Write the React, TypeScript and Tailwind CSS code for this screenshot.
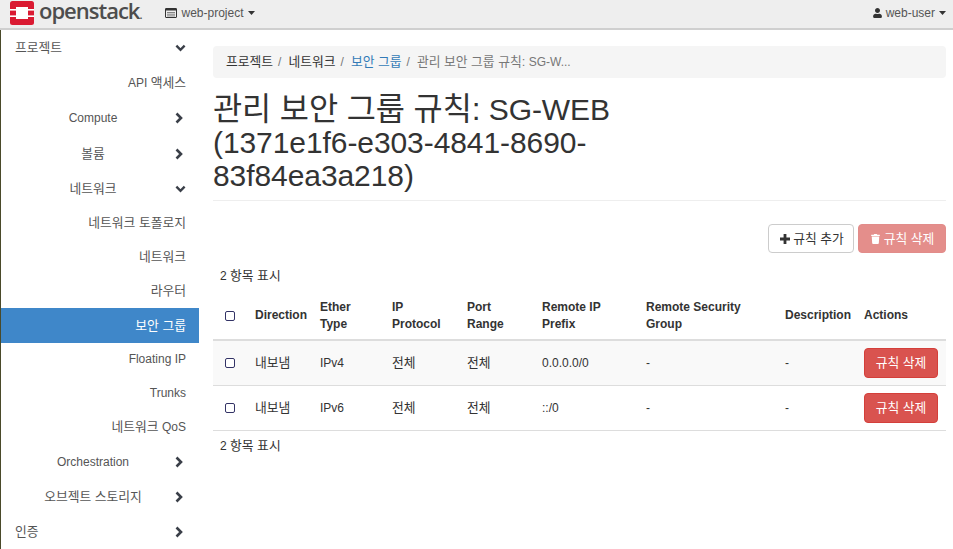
import React from 'react';
import { FaUser, FaTrash } from 'react-icons/fa';

const Logo = () => (
  <svg viewBox="0 0 24 24" className="w-[24px] h-[24px] shrink-0">
    <rect width="24" height="24" rx="2.5" fill="#da1a32" />
    <rect x="6" y="6" width="12" height="12" fill="#ffffff" />
    <rect x="0" y="8" width="6" height="1.6" fill="#ffffff" />
    <rect x="0" y="14.4" width="6" height="1.6" fill="#ffffff" />
    <rect x="18" y="8" width="6" height="1.6" fill="#ffffff" />
    <rect x="18" y="14.4" width="6" height="1.6" fill="#ffffff" />
  </svg>
);

const Caret = ({ className = '' }: { className?: string }) => (
  <svg viewBox="0 0 7 4" className={`w-[7px] h-[4px] ${className}`}>
    <path d="M0 0h7L3.5 4z" fill="#333333" />
  </svg>
);

const ListIcon = () => (
  <svg viewBox="0 0 12 10" className="w-[12px] h-[10px] shrink-0">
    <rect x="0.5" y="0.5" width="11" height="9" rx="0.5" fill="none" stroke="#333333" />
    <rect x="0.5" y="0.5" width="11" height="2" fill="#333333" />
    <path d="M2 4.5h8M2 6.2h8M2 7.9h8" stroke="#777777" strokeWidth="0.9" />
  </svg>
);

const ChevronDown = () => (
  <svg viewBox="0 0 12 8" className="w-[11px] h-[8px] shrink-0">
    <path d="M1.5 1.5L6 6l4.5-4.5" fill="none" stroke="#3a3f48" strokeWidth="2.6" />
  </svg>
);

const ChevronRight = () => (
  <svg viewBox="0 0 8 12" className="w-[8px] h-[12px] shrink-0">
    <path d="M1.5 1.5L6 6l-4.5 4.5" fill="none" stroke="#3a3f48" strokeWidth="2.6" />
  </svg>
);

const PlusIcon = () => (
  <svg viewBox="0 0 10 10" className="w-[10px] h-[10px] shrink-0">
    <path d="M5 0v10M0 5h10" stroke="#333333" strokeWidth="2.8" />
  </svg>
);

// Hangul in the reference sets wider than Noto at the same size, so it gets its own size
const Ko = ({ children }: { children: React.ReactNode }) => <span className="text-[12.8px]">{children}</span>;

const Navbar = () => (
  <header className="h-[30px] bg-[#eeeeee] border-b-2 border-[#cfcfcf] flex items-center justify-between pl-[10px] pr-[7px] pb-[3px] shrink-0">
    <div className="flex items-center">
      <Logo />
      <span className="ml-[5px] text-[22px] leading-[26px] tracking-[-1px] text-[#4d4d4d] font-['Open_Sans',sans-serif] font-semibold">openstack<span className="text-[11px]">.</span></span>
      <div className="ml-[23px] flex items-center text-[#555555]">
        <ListIcon />
        <span className="ml-[5px]">web-project</span>
        <Caret className="ml-[4px]" />
      </div>
    </div>
    <div className="flex items-center text-[#555555]">
      <FaUser className="w-[9px] h-[10px] text-[#333333]" />
      <span className="ml-[4px]">web-user</span>
      <Caret className="ml-[4px]" />
    </div>
  </header>
);

type NavRow = { label: React.ReactNode; h: string; open?: boolean; closed?: boolean; left?: boolean; active?: boolean };

const navRows: NavRow[] = [
  { label: <Ko>프로젝트</Ko>, h: 'h-[35px]', open: true, left: true },
  { label: <>API <Ko>액세스</Ko></>, h: 'h-[35px]' },
  { label: 'Compute', h: 'h-[36px]', closed: true },
  { label: <Ko>볼륨</Ko>, h: 'h-[35px]', closed: true },
  { label: <Ko>네트워크</Ko>, h: 'h-[35px]', open: true },
  { label: <Ko>네트워크 토폴로지</Ko>, h: 'h-[34px]' },
  { label: <Ko>네트워크</Ko>, h: 'h-[34px]' },
  { label: <Ko>라우터</Ko>, h: 'h-[34px]' },
  { label: <Ko>보안 그룹</Ko>, h: 'h-[35px]', active: true },
  { label: 'Floating IP', h: 'h-[32px]' },
  { label: 'Trunks', h: 'h-[35px]' },
  { label: <><Ko>네트워크</Ko> QoS</>, h: 'h-[34px]' },
  { label: 'Orchestration', h: 'h-[35px]', closed: true },
  { label: <Ko>오브젝트 스토리지</Ko>, h: 'h-[35px]', closed: true },
  { label: <Ko>인증</Ko>, h: 'h-[35px]', closed: true, left: true },
];

const Sidebar = () => (
  <nav className="w-[198px] shrink-0 flex flex-col">
    {navRows.map((row, i) => {
      const hasChevron = row.open || row.closed;
      return (
        <div key={i} className={`${row.h} flex items-center ${row.active ? 'bg-[#3f87c9] text-white' : 'text-[#555555]'}`}>
          {row.left ? (
            <span className="pl-[14px] w-[184px]">{row.label}</span>
          ) : hasChevron ? (
            <span className="w-[184px] text-center">{row.label}</span>
          ) : (
            <span className="w-[185px] text-right">{row.label}</span>
          )}
          {row.open && <span className="-ml-[10px]"><ChevronDown /></span>}
          {row.closed && <span className="-ml-[10px] flex"><ChevronRight /></span>}
        </div>
      );
    })}
  </nav>
);

const Check = () => <span className="block ml-[4px] w-[10px] h-[10px] rounded-[2px] border border-[#333366] bg-white" />;

const Rows = [
  { eth: 'IPv4', remote: '0.0.0.0/0', bg: 'bg-[#f9f9f9]' },
  { eth: 'IPv6', remote: '::/0', bg: 'bg-white' },
];

const Th = ({ children }: { children: React.ReactNode }) => (
  <th className="px-[8px] py-[6px] text-left align-middle font-bold text-[#333333] border-b-2 border-[#dddddd] leading-[17px]">{children}</th>
);

const Td = ({ children }: { children: React.ReactNode }) => (
  <td className="px-[8px] align-middle text-[#333333] border-b border-[#dddddd]">{children}</td>
);

const Count = ({ className = '' }: { className?: string }) => (
  <div className={`pl-[7px] text-[#333333] ${className}`}>2 <Ko>항목 표시</Ko></div>
);

const Sep = () => <span className="text-[#777777] pl-[5px] pr-[7px]">/</span>;

export default function App() {
  return (
    <div className="w-[953px] h-[549px] overflow-hidden flex flex-col bg-white text-[12px] font-['Liberation_Sans','Noto_Sans_CJK_KR',sans-serif]">
      <Navbar />
      <div className="flex flex-1 min-h-0 border-l border-[#4a4a2a]">
        <Sidebar />
        <main className="ml-[14px] w-[733px] shrink-0">
          <div className="mt-[16px] h-[32px] rounded-[4px] bg-[#f5f5f5] flex items-center pl-[13px]">
            <span className="text-[#333333]"><Ko>프로젝트</Ko></span>
            <Sep />
            <span className="text-[#333333]"><Ko>네트워크</Ko></span>
            <Sep />
            <span className="text-[#337ab7]"><Ko>보안 그룹</Ko></span>
            <Sep />
            <span className="text-[#777777]"><Ko>관리 보안 그룹 규칙:</Ko> SG-W...</span>
          </div>
          <h1 className="mt-[15px] pb-[8px] border-b border-[#eeeeee] text-[30px] leading-[33px] tracking-[-0.08px] text-[#333333] font-normal w-[733px]">
            <span className="text-[31.7px]">관리 보안 그룹 규칙:</span> SG-WEB<br />(1371e1f6-e303-4841-8690-<br />83f84ea3a218)
          </h1>
          <div className="mt-[23px] flex justify-end gap-[4px]">
            <button className="h-[29px] w-[86px] pl-[2px] rounded-[4px] border border-[#cccccc] bg-white text-[#333333] flex items-center justify-center gap-[3px]">
              <PlusIcon /><Ko>규칙 추가</Ko>
            </button>
            <button className="h-[29px] w-[88px] pl-[1px] rounded-[4px] border border-[#e28c8a] bg-[#e48e8b] text-white flex items-center justify-center gap-[4px]">
              <FaTrash className="w-[9px] h-[10px]" /><Ko>규칙 삭제</Ko>
            </button>
          </div>
          <Count className="mt-[13px]" />
          <table className="mt-[7px] w-[733px] table-fixed border-collapse">
            <colgroup>
              <col className="w-[34px]" /><col className="w-[65px]" /><col className="w-[72px]" /><col className="w-[75px]" /><col className="w-[75px]" /><col className="w-[104px]" /><col className="w-[139px]" /><col className="w-[79px]" /><col className="w-[90px]" />
            </colgroup>
            <thead>
              <tr className="h-[48px]">
                <Th><Check /></Th>
                <Th>Direction</Th>
                <Th>Ether Type</Th>
                <Th>IP Protocol</Th>
                <Th>Port Range</Th>
                <Th>Remote IP Prefix</Th>
                <Th>Remote Security Group</Th>
                <Th>Description</Th>
                <Th>Actions</Th>
              </tr>
            </thead>
            <tbody>
              {Rows.map((r, i) => (
                <tr key={i} className={`h-[45px] ${r.bg}`}>
                  <Td><Check /></Td>
                  <Td><Ko>내보냄</Ko></Td>
                  <Td>{r.eth}</Td>
                  <Td><Ko>전체</Ko></Td>
                  <Td><Ko>전체</Ko></Td>
                  <Td>{r.remote}</Td>
                  <Td>-</Td>
                  <Td>-</Td>
                  <Td>
                    <button className="h-[30px] w-[74px] rounded-[4px] border border-[#d43f3a] bg-[#d9534f] text-white"><Ko>규칙 삭제</Ko></button>
                  </Td>
                </tr>
              ))}
            </tbody>
          </table>
          <Count className="mt-[5px]" />
        </main>
      </div>
    </div>
  );
}
